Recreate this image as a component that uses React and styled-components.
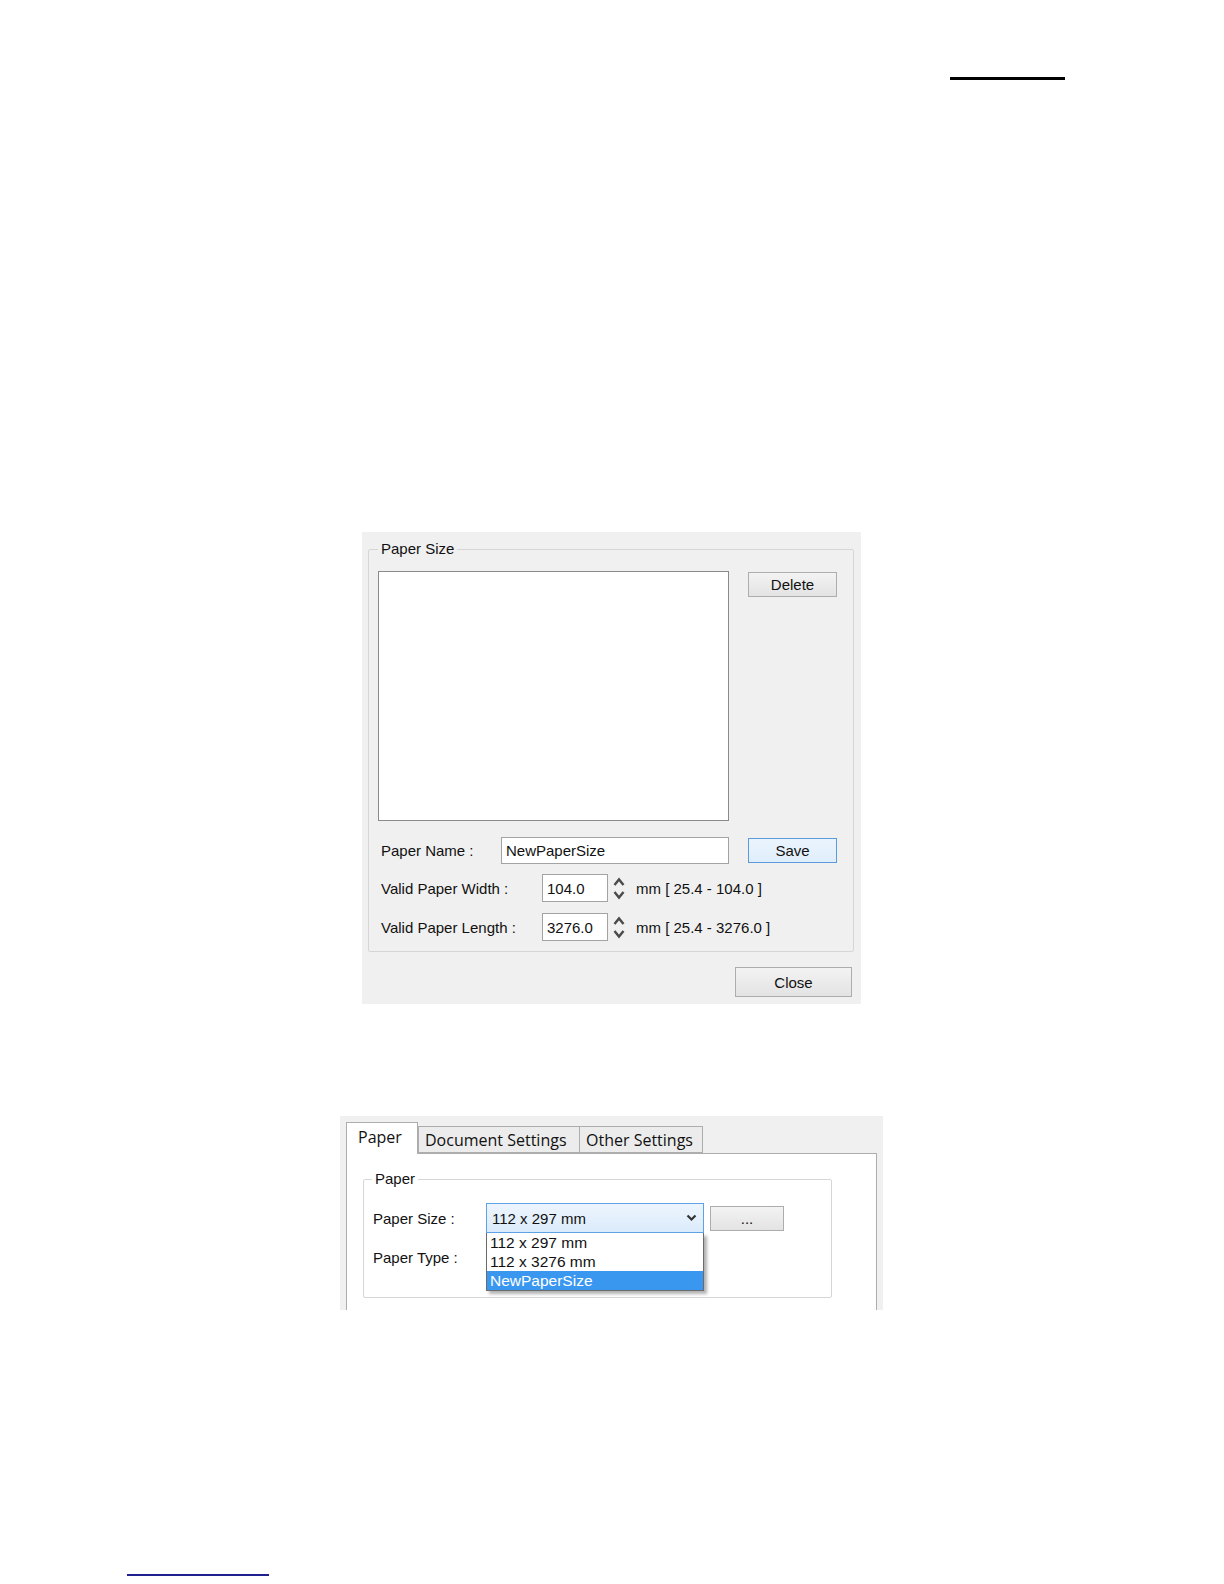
import React from "react";
import styled, { createGlobalStyle } from "styled-components";

const GlobalStyle = createGlobalStyle`
  html, body {
    margin: 0;
    padding: 0;
    background: #ffffff;
  }
  body {
    font-family: "Liberation Sans", Arial, sans-serif;
    color: #111;
  }
`;

const Page = styled.div`
  width: 1224px;
  height: 1584px;
  padding-top: 77px;
  box-sizing: border-box;
  overflow: hidden;
  position: relative;
`;

const Rule = styled.div`
  margin-left: ${(p) => p.$left}px;
  margin-top: ${(p) => p.$top || 0}px;
  width: ${(p) => p.$width}px;
  height: ${(p) => p.$height}px;
  background: ${(p) => p.$color};
`;

/* ---------- dialog 1 : paper size editor ---------- */

const Dialog = styled.div`
  margin: 452px 0 0 362px;
  width: 499px;
  height: 472px;
  box-sizing: border-box;
  background: #f0f0f0;
  padding: 8px 7px 7px 6px;
  display: flex;
  flex-direction: column;
  font-size: 15px;
`;

const GroupBox = styled.fieldset`
  margin: 0;
  border: 1px solid #d6d6d6;
  border-radius: 2px;
  padding: ${(p) => p.$pad};
  min-width: 0;
  box-sizing: border-box;
  height: ${(p) => p.$height}px;
  width: ${(p) => (p.$width ? `${p.$width}px` : "auto")};
  display: flex;
  flex-direction: column;
`;

// legend offset is measured from the fieldset's inner padding edge
const Legend = styled.legend`
  margin-left: ${(p) => p.$indent}px;
  padding: 0 3px;
  line-height: 18px;
  font-size: 15px;
  color: #111;
`;

const Row = styled.div`
  display: flex;
  align-items: center;
  margin-top: ${(p) => p.$gap || 0}px;
  height: ${(p) => p.$height}px;
`;

const TopRow = styled.div`
  display: flex;
  align-items: flex-start;
`;

const ListBox = styled.div`
  width: 351px;
  height: 250px;
  box-sizing: border-box;
  background: #ffffff;
  border: 1px solid #8a8a8a;
`;

const Button = styled.div`
  width: ${(p) => p.$width}px;
  height: ${(p) => p.$height}px;
  margin-left: ${(p) => p.$ml || 0}px;
  margin-top: ${(p) => p.$mt || 0}px;
  box-sizing: border-box;
  border: 1px solid ${(p) => (p.$focus ? "#5b9bd9" : "#adadad")};
  background: ${(p) =>
    p.$focus
      ? "linear-gradient(#eaf4fd, #e0eefb)"
      : "linear-gradient(#f3f3f3, #e3e3e3)"};
  display: flex;
  align-items: center;
  justify-content: center;
  font-size: 15px;
  color: #111;
  flex-shrink: 0;
`;

const Label = styled.div`
  width: ${(p) => p.$width}px;
  padding-left: ${(p) => p.$indent || 0}px;
  box-sizing: border-box;
  white-space: nowrap;
  flex-shrink: 0;
`;

const TextBox = styled.div`
  width: ${(p) => p.$width}px;
  height: ${(p) => p.$height}px;
  box-sizing: border-box;
  border: 1px solid #a3a3a3;
  background: #ffffff;
  padding-left: 4px;
  display: flex;
  align-items: center;
  flex-shrink: 0;
`;

const Spinner = styled.svg`
  margin-left: 5px;
  flex-shrink: 0;
`;

const RangeText = styled.div`
  margin-left: 11px;
  white-space: nowrap;
`;

const DialogFooter = styled.div`
  display: flex;
  justify-content: flex-end;
  padding-right: 2px;
  margin-top: 15px;
`;

function SpinArrows() {
  return (
    <Spinner width="12" height="28" viewBox="0 0 12 28">
      <path d="M1.5 11 L6 5.5 L10.5 11" fill="none" stroke="#4a4a4a" strokeWidth="2.4" />
      <path d="M1.5 18 L6 23.5 L10.5 18" fill="none" stroke="#4a4a4a" strokeWidth="2.4" />
    </Spinner>
  );
}

/* ---------- dialog 2 : tab page with paper combo ---------- */

const TabPanel = styled.div`
  margin: 112px 0 0 340px;
  width: 543px;
  height: 194px;
  box-sizing: border-box;
  background: #f0f0f0;
  padding: 6px 6px 0 6px;
  overflow: hidden;
  display: flex;
  flex-direction: column;
`;

const TabStrip = styled.div`
  display: flex;
  align-items: flex-end;
  height: 31px;
  position: relative;
  z-index: 1;
`;

const Tab = styled.div`
  box-sizing: border-box;
  width: ${(p) => p.$width}px;
  height: ${(p) => (p.$active ? 32 : 27)}px;
  margin-left: ${(p) => p.$ml || 0}px;
  margin-bottom: ${(p) => (p.$active ? -1 : 0)}px;
  border: 1px solid #adadad;
  border-bottom: ${(p) => (p.$active ? "none" : "1px solid #adadad")};
  background: ${(p) => (p.$active ? "#ffffff" : "#ececec")};
  padding-left: ${(p) => (p.$active ? 11 : 6)}px;
  padding-bottom: ${(p) => (p.$active ? 3 : 0)}px;
  display: flex;
  align-items: center;
  font-family: "Open Sans", "Liberation Sans", sans-serif;
  font-size: 16px;
  color: #111;
  white-space: nowrap;
  position: relative;
  z-index: ${(p) => (p.$active ? 2 : 1)};
`;

const TabContent = styled.div`
  flex: 1;
  background: #ffffff;
  border: 1px solid #adadad;
  border-bottom: none;
  padding: 16px 0 0 16px;
  font-size: 15px;
`;

const ComboWrap = styled.div`
  position: relative;
  flex-shrink: 0;
`;

const Combo = styled.div`
  width: 218px;
  height: 30px;
  box-sizing: border-box;
  border: 1px solid #5ea2e6;
  background: linear-gradient(#edf5fd, #dbebfb);
  display: flex;
  align-items: center;
  justify-content: space-between;
  padding: 0 6px 0 5px;
`;

const DropList = styled.div`
  position: absolute;
  top: 30px;
  left: 0;
  width: 218px;
  box-sizing: border-box;
  background: #ffffff;
  border: 1px solid #6b6b6b;
  border-top: none;
  box-shadow: 3px 3px 3px rgba(0, 0, 0, 0.3);
  z-index: 5;
`;

const DropItem = styled.div`
  height: 19px;
  line-height: 19px;
  padding-left: 3px;
  font-size: 15.5px;
  background: ${(p) => (p.$selected ? "#3a97ef" : "transparent")};
  color: ${(p) => (p.$selected ? "#ffffff" : "#111")};
  white-space: nowrap;
`;

const sizes = ["112 x 297 mm", "112 x 3276 mm", "NewPaperSize"];

export default function App() {
  return (
    <Page>
      <GlobalStyle />
      <Rule $left={950} $width={115} $height={3} $color="#000000" />

      <Dialog>
        <GroupBox $pad="13px 8px 10px 9px" $height={412}>
          <Legend $indent={0}>Paper Size</Legend>
          <TopRow>
            <ListBox />
            <Button $width={89} $height={25} $ml={19} $mt={1}>
              Delete
            </Button>
          </TopRow>
          <Row $gap={16} $height={27}>
            <Label $width={123} $indent={3}>
              Paper Name :
            </Label>
            <TextBox $width={228} $height={27}>
              NewPaperSize
            </TextBox>
            <Button $width={89} $height={25} $ml={19} $focus>
              Save
            </Button>
          </Row>
          <Row $gap={10} $height={28}>
            <Label $width={164} $indent={3}>
              Valid Paper Width :
            </Label>
            <TextBox $width={66} $height={28}>
              104.0
            </TextBox>
            <SpinArrows />
            <RangeText>mm [ 25.4 - 104.0 ]</RangeText>
          </Row>
          <Row $gap={11} $height={28}>
            <Label $width={164} $indent={3}>
              Valid Paper Length :
            </Label>
            <TextBox $width={66} $height={28}>
              3276.0
            </TextBox>
            <SpinArrows />
            <RangeText>mm [ 25.4 - 3276.0 ]</RangeText>
          </Row>
        </GroupBox>
        <DialogFooter>
          <Button $width={117} $height={30}>
            Close
          </Button>
        </DialogFooter>
      </Dialog>

      <TabPanel>
        <TabStrip>
          <Tab $width={72} $active>
            Paper
          </Tab>
          <Tab $width={162} $ml={0}>
            Document Settings
          </Tab>
          <Tab $width={124} $ml={-1}>
            Other Settings
          </Tab>
        </TabStrip>
        <TabContent>
          <GroupBox $pad="15px 0 0 9px" $height={128} $width={469}>
            <Legend $indent={-1}>Paper</Legend>
            <Row $height={30}>
              <Label $width={113}>Paper Size :</Label>
              <ComboWrap>
                <Combo>
                  <span>112 x 297 mm</span>
                  <svg width="11" height="8" viewBox="0 0 11 8">
                    <path d="M1.5 1.5 L5.5 5.5 L9.5 1.5" fill="none" stroke="#333" strokeWidth="2.2" />
                  </svg>
                </Combo>
                <DropList>
                  {sizes.map((s, i) => (
                    <DropItem key={s} $selected={i === sizes.length - 1}>
                      {s}
                    </DropItem>
                  ))}
                </DropList>
              </ComboWrap>
              <Button $width={74} $height={25} $ml={6}>
                ...
              </Button>
            </Row>
            <Row $gap={10} $height={28}>
              <Label $width={113}>Paper Type :</Label>
            </Row>
          </GroupBox>
        </TabContent>
      </TabPanel>

      <Rule $left={127} $top={264} $width={142} $height={2} $color="#1f1f8f" />
    </Page>
  );
}
